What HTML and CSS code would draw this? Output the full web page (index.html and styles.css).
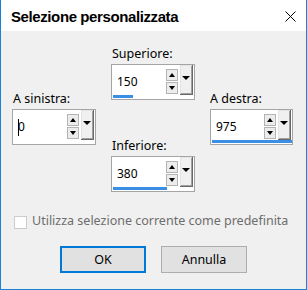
FILE: index.html
```html
<!DOCTYPE html>
<html lang="it">
<head>
<meta charset="UTF-8" />
<title>Selezione personalizzata</title>
<link rel="stylesheet" href="styles.css">
</head>
<body>
  <div class="window">
    <div class="titlebar">
      <span class="title">Selezione personalizzata</span>
      <svg class="close" width="11" height="11" viewBox="0 0 11 11" aria-label="Chiudi">
        <path d="M0.5 0.5 L10.5 10.5 M10.5 0.5 L0.5 10.5" stroke="#000" stroke-width="1" fill="none"/>
      </svg>
    </div>

    <div class="sides">
      <div class="group side">
        <div class="label">A sinistra:</div>
        <div class="spin">
          <div class="spin-row">
            <div class="value"><span class="caret"></span>0</div>
            <div class="arrows">
              <span class="arrow up"></span>
              <span class="arrow down"></span>
            </div>
            <span class="drop"></span>
          </div>
          <div class="bar" style="width:0px"></div>
        </div>
      </div>

      <div class="middle">
        <div class="group">
          <div class="label">Superiore:</div>
          <div class="spin">
            <div class="spin-row">
              <div class="value">150</div>
              <div class="arrows">
                <span class="arrow up"></span>
                <span class="arrow down"></span>
              </div>
              <span class="drop"></span>
            </div>
            <div class="bar" style="width:20px"></div>
          </div>
        </div>
        <div class="group">
          <div class="label">Inferiore:</div>
          <div class="spin">
            <div class="spin-row">
              <div class="value">380</div>
              <div class="arrows">
                <span class="arrow up"></span>
                <span class="arrow down"></span>
              </div>
              <span class="drop"></span>
            </div>
            <div class="bar" style="width:54px"></div>
          </div>
        </div>
      </div>

      <div class="group side right">
        <div class="label">A destra:</div>
        <div class="spin">
          <div class="spin-row">
            <div class="value">975</div>
            <div class="arrows">
              <span class="arrow up"></span>
              <span class="arrow down"></span>
            </div>
            <span class="drop"></span>
          </div>
          <div class="bar" style="width:80px"></div>
        </div>
      </div>
    </div>

    <label class="check-row">
      <span class="checkbox"></span>
      <span class="check-text">Utilizza selezione corrente come predefinita</span>
    </label>

    <div class="buttons">
      <button class="btn default">OK</button>
      <button class="btn">Annulla</button>
    </div>
  </div>
</body>
</html>
```

FILE: styles.css
```css
/* Reset */
* {
  box-sizing: border-box;
}
body {
  margin: 0;
  background: #fff;
  font-family: "Noto Sans", "Liberation Sans", sans-serif;
  font-size: 12px;
  color: #000;
}
.window {
  width: 307px;
  height: 290px;
  background: #f0f0f0;
  border: 1px solid #1883d7;
  border-top: none;
}

/* Title bar */
.titlebar {
  height: 31px;
  background: #fff;
  display: flex;
  align-items: center;
  justify-content: space-between;
  padding: 1px 10px 0 10px;
}
.title {
  font-family: "Liberation Sans", sans-serif;
  font-weight: bold;
  font-size: 15px;
  letter-spacing: -0.4px;
}
.close {
  display: block;
}

/* Spin fields */
.sides {
  display: grid;
  grid-template-columns: 84px 84px 83px;
  column-gap: 15px;
  padding: 15px 0 0 11px;
}
.sides .right {
  margin-left: -1px;
}
.sides .right .label,
.sides .right .spin {
  margin-left: 1px;
}
.middle {
  display: flex;
  flex-direction: column;
  gap: 38px;
}
.side {
  margin-top: 45px;
}
.label {
  font-size: 12.5px;
  line-height: 16px;
  height: 16px;
  margin-bottom: 2px;
  padding-left: 1px;
  color: #000;
}
.right .label {
  padding-left: 0;
}
.spin {
  width: 84px;
  height: 36px;
  background: #fff;
  border: 1px solid #a5a5a5;
}
.right .spin {
  width: 83px;
}
.spin-row {
  display: flex;
  align-items: flex-start;
  height: 30px;
}
.value {
  width: 54px;
  padding: 9px 0 0 5px;
  line-height: 15px;
  white-space: nowrap;
}
.right .value {
  width: 53px;
}
.caret {
  display: inline-block;
  width: 1px;
  height: 17px;
  background: #000;
  vertical-align: -5px;
  margin-right: -1px;
}
.arrows {
  display: flex;
  flex-direction: column;
  gap: 1px;
  margin-top: 4px;
}
.arrow {
  display: flex;
  align-items: center;
  justify-content: center;
  width: 12px;
  height: 12px;
  border: 1px solid #b4b4b4;
  background: #ececec;
}
.arrow::after {
  content: "";
  border-left: 3px solid transparent;
  border-right: 3px solid transparent;
}
.arrow.up::after {
  border-bottom: 4px solid #000;
}
.arrow.down::after {
  border-top: 4px solid #000;
}
.drop {
  display: flex;
  justify-content: center;
  width: 13px;
  height: 30px;
  margin-left: 2px;
  padding-top: 11px;
  background: #f0f0f0;
  border-right: 1px solid #696969;
  border-bottom: 1px solid #696969;
  box-shadow: inset 1px 1px #e3e3e3, inset -1px -1px #a0a0a0;
}
.drop::after {
  content: "";
  width: 0;
  height: 0;
  border-left: 4px solid transparent;
  border-right: 4px solid transparent;
  border-top: 4px solid #000;
}
.bar {
  height: 3px;
  margin-left: 1px;
  background: #3a8ee6;
}

/* Checkbox */
.check-row {
  display: flex;
  align-items: flex-start;
  margin-top: 21px;
  padding-left: 13px;
  font-size: 12.5px;
  line-height: 16px;
  color: #6d6d6d;
}
.checkbox {
  width: 13px;
  height: 13px;
  margin-top: 3px;
  border: 1px solid #cccccc;
  background: #fff;
}
.check-text {
  margin-left: 5px;
}

/* Buttons */
.buttons {
  display: flex;
  justify-content: center;
  gap: 15px;
  margin-top: 17px;
}
.btn {
  width: 86px;
  height: 27px;
  font-family: "Noto Sans", "Liberation Sans", sans-serif;
  font-size: 12.5px;
  color: #000;
  background: #e1e1e1;
  border: 1px solid #adadad;
  padding: 0;
}
.btn.default {
  border: 2px solid #0078d7;
}
```
